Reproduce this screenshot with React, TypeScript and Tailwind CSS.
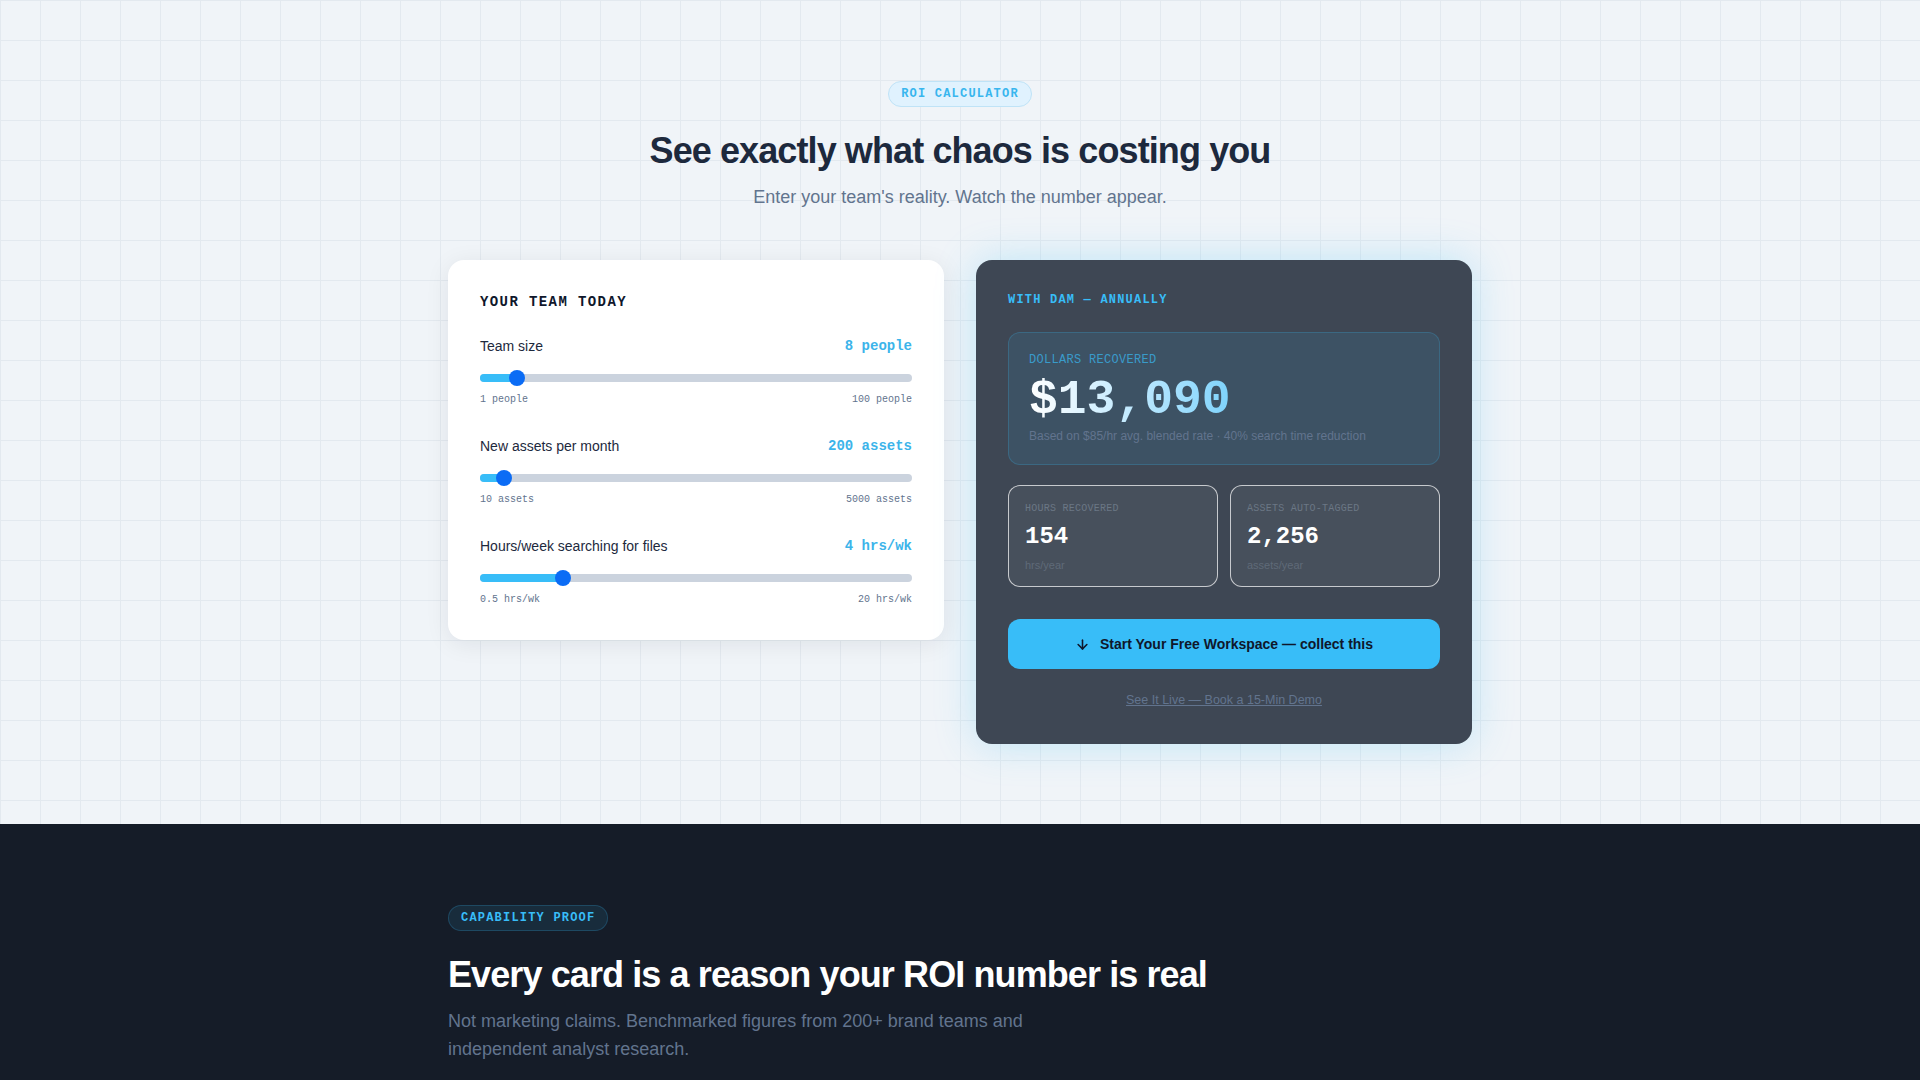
import React from 'react';
import { ArrowDown } from 'lucide-react';

const sans = 'font-["Liberation_Sans",Arial,sans-serif]';
const mono = 'font-["Liberation_Mono","Courier_New",monospace]';

type SliderProps = {
  label: string;
  value: string;
  min: string;
  max: string;
  pct: number;
};

// track + thumb drawn like a native range input (16px thumb)
function SliderRow({ label, value, min, max, pct }: SliderProps) {
  const pos = `calc(8px + (100% - 16px) * ${pct})`;
  return (
    <div>
      <div className="flex items-center justify-between">
        <span className="text-sm leading-5 text-slate-800">{label}</span>
        <span className={`${mono} text-sm font-bold leading-5 text-[#3cb4ea]`}>{value}</span>
      </div>
      <div className="relative mt-3 flex h-5 items-center">
        <div className="h-2 w-full rounded-full bg-[#cbd3de]" />
        <div className="absolute left-0 top-1.5 h-2 rounded-full bg-[#38bdf8]" style={{ width: pos }} />
        <div
          className="absolute top-0.5 h-4 w-4 -translate-x-1/2 rounded-full bg-[#0b6cf5]"
          style={{ left: pos }}
        />
      </div>
      <div className={`${mono} mt-1 flex justify-between text-[10px] leading-4 text-slate-500`}>
        <span>{min}</span>
        <span>{max}</span>
      </div>
    </div>
  );
}

function StatBox({ label, value, unit }: { label: string; value: string; unit: string }) {
  return (
    <div className="rounded-xl border border-white/70 bg-white/5 px-4 pb-[13px] pt-[15px]">
      <div className={`${mono} text-[10px] uppercase leading-4 tracking-wide text-[#6b7785]`}>{label}</div>
      <div className={`${mono} mt-1 text-2xl font-bold leading-8 text-white`}>{value}</div>
      <div className="mt-1 text-[11px] leading-4 text-[#5f6a78]">{unit}</div>
    </div>
  );
}

export default function App() {
  return (
    <div className={`${sans} min-h-screen bg-[#151c28]`}>
      {/* ROI calculator */}
      <section className="bg-[#f0f4f8] bg-[linear-gradient(to_right,#e3e9ef_1px,transparent_1px),linear-gradient(to_bottom,#e3e9ef_1px,transparent_1px)] bg-[size:40px_40px] px-6 pb-20 pt-[81px]">
        <div className="mx-auto flex max-w-5xl flex-col items-center text-center">
          <span className={`${mono} rounded-full border border-[#bfe3f7] bg-[#e0f2fe] px-3 py-1 text-xs font-bold leading-4 tracking-widest text-[#38b6ee]`}>
            ROI CALCULATOR
          </span>
          <h2 className="mt-6 text-4xl font-bold leading-10 tracking-tight text-slate-800">
            See exactly what chaos is costing you
          </h2>
          <p className="mt-3 text-lg leading-7 text-slate-500">Enter your team's reality. Watch the number appear.</p>
        </div>

        <div className="mx-auto mt-[49px] grid max-w-5xl grid-cols-2 items-start gap-8">
          <div className="rounded-2xl bg-white p-8 shadow-[0_4px_24px_rgba(15,23,42,0.08)]">
            <h3 className={`${mono} text-sm font-bold leading-5 tracking-widest text-slate-900`}>YOUR TEAM TODAY</h3>
            <div className="mt-6 flex flex-col gap-7">
              <SliderRow label="Team size" value="8 people" min="1 people" max="100 people" pct={7 / 99} />
              <SliderRow label="New assets per month" value="200 assets" min="10 assets" max="5000 assets" pct={190 / 4990} />
              <SliderRow label="Hours/week searching for files" value="4 hrs/wk" min="0.5 hrs/wk" max="20 hrs/wk" pct={3.5 / 19.5} />
            </div>
          </div>

          <div className="rounded-2xl bg-[#3e4754] px-8 pb-[33px] pt-8 shadow-[0_0_40px_rgba(56,189,248,0.28)]">
            <h3 className={`${mono} text-xs font-bold leading-4 tracking-widest text-[#38bdf8]`}>WITH DAM — ANNUALLY</h3>

            <div className="mt-6 rounded-xl border border-[#38bdf8]/20 bg-[#38bdf8]/10 px-5 pb-5 pt-[19px]">
              <div className={`${mono} text-xs leading-4 tracking-wide text-[#38bdf8]/70`}>DOLLARS RECOVERED</div>
              <div className={`${mono} mt-2 w-fit bg-gradient-to-r from-white to-[#7dd3fc] bg-clip-text text-5xl font-bold leading-[48px] text-transparent`}>
                $13,090
              </div>
              <div className="mt-1 text-xs leading-4 text-slate-500">
                Based on $85/hr avg. blended rate · 40% search time reduction
              </div>
            </div>

            <div className="mt-5 grid grid-cols-2 gap-3">
              <StatBox label="Hours recovered" value="154" unit="hrs/year" />
              <StatBox label="Assets auto-tagged" value="2,256" unit="assets/year" />
            </div>

            <button className="mt-8 flex h-[50px] w-full items-center justify-center gap-2.5 rounded-xl bg-[#38bdf8] text-sm font-bold text-slate-900">
              <ArrowDown size={15} strokeWidth={2.5} />
              Start Your Free Workspace — collect this
            </button>

            <div className="mt-[18px] text-center">
              <a className="text-[12.5px] leading-[18px] text-slate-500 underline">See It Live — Book a 15-Min Demo</a>
            </div>
          </div>
        </div>
      </section>

      {/* Capability proof */}
      <section className="px-6 pb-24 pt-20">
        <div className="mx-auto max-w-5xl">
          <span className={`${mono} inline-block rounded-full border border-[#38bdf8]/20 bg-[#38bdf8]/10 px-3 py-1 text-xs font-bold leading-4 tracking-widest text-[#38bdf8]`}>
            CAPABILITY PROOF
          </span>
          <h2 className="mt-6 text-4xl font-bold leading-10 tracking-tight text-white">
            Every card is a reason your ROI number is real
          </h2>
          <p className="mt-3 max-w-xl text-lg leading-7 text-slate-500">
            Not marketing claims. Benchmarked figures from 200+ brand teams and independent analyst research.
          </p>
        </div>
      </section>
    </div>
  );
}
